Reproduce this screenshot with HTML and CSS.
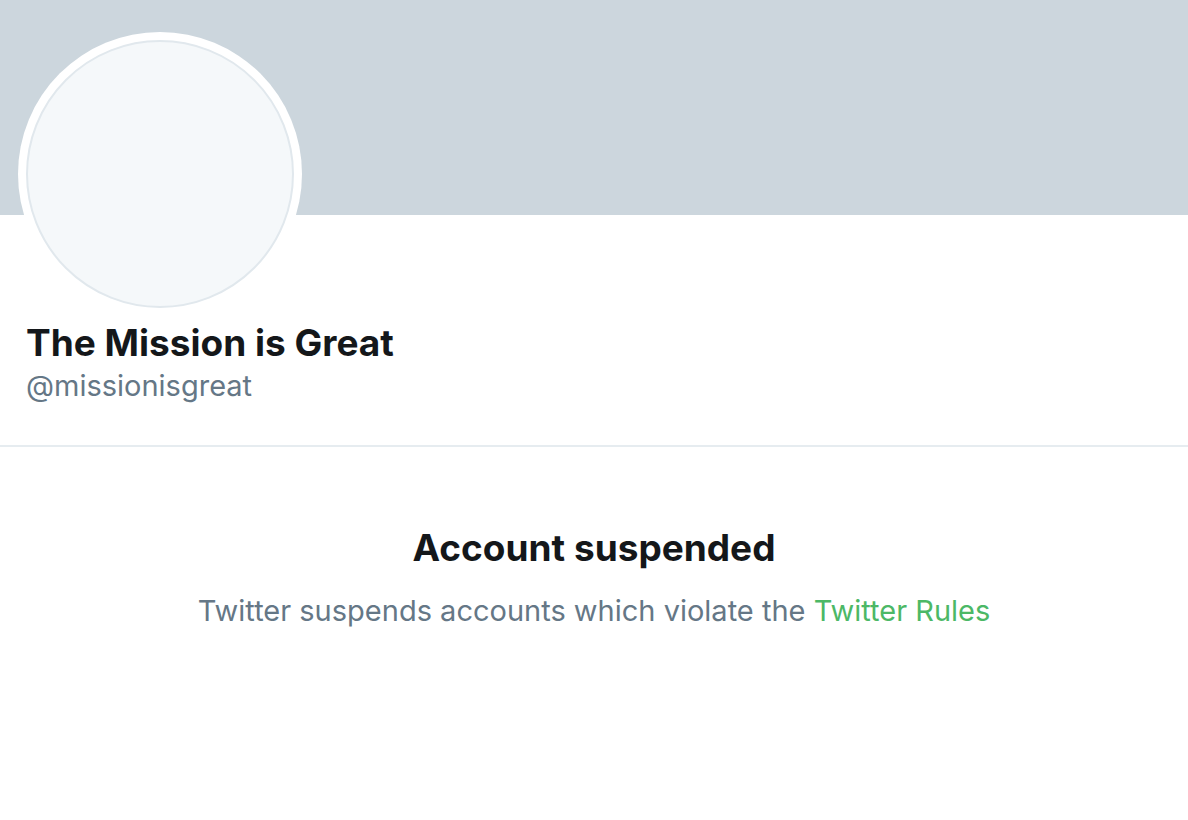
FILE: index.html
```html
<!DOCTYPE html>
<html>
<head>
<meta charset="utf-8">
<link rel="stylesheet" href="styles.css">
</head>
<body>
<div class="page">
  <div class="banner"></div>
  <div class="profile">
    <div class="avatar"><div class="avatar-inner"></div></div>
    <div class="name">The Mission is Great</div>
    <div class="handle">@missionisgreat</div>
  </div>
  <div class="divider"></div>
  <div class="notice">
    <div class="notice-title">Account suspended</div>
    <div class="notice-text">Twitter suspends accounts which violate the <a class="link" href="#">Twitter Rules</a></div>
  </div>
</div>
</body>
</html>
```
FILE: styles.css
```css
html, body {
  margin: 0;
  padding: 0;
  background: #ffffff;
}
body {
  font-family: Inter, "Noto Sans", "Liberation Sans", sans-serif;
}
.banner {
  height: 215px;
  background: #ccd6dd;
}
.profile {
  padding: 0 0 0 18px;
}
.avatar {
  width: 284px;
  height: 284px;
  margin-top: -183px;
  border-radius: 50%;
  background: #ffffff;
  padding: 8px;
  box-sizing: border-box;
}
.avatar-inner {
  width: 100%;
  height: 100%;
  border-radius: 50%;
  background: #f5f8fa;
  border: 2px solid #e1e8ed;
  box-sizing: border-box;
}
.name {
  margin: 5px 0 0 8px;
  font-size: 37px;
  font-weight: 700;
  color: #14171a;
  line-height: 44px;
}
.handle {
  margin: 2px 0 0 8px;
  font-size: 29px;
  color: #657786;
  line-height: 38px;
}
.divider {
  height: 2px;
  background: #e6ecf0;
  margin-top: 40px;
}
.notice {
  text-align: center;
  padding-top: 79px;
}
.notice-title {
  font-size: 37px;
  font-weight: 700;
  color: #14171a;
  line-height: 44px;
}
.notice-text {
  margin-top: 22px;
  font-size: 29px;
  color: #657786;
  line-height: 38px;
}
.link {
  color: #4cb866;
  text-decoration: none;
}
```
